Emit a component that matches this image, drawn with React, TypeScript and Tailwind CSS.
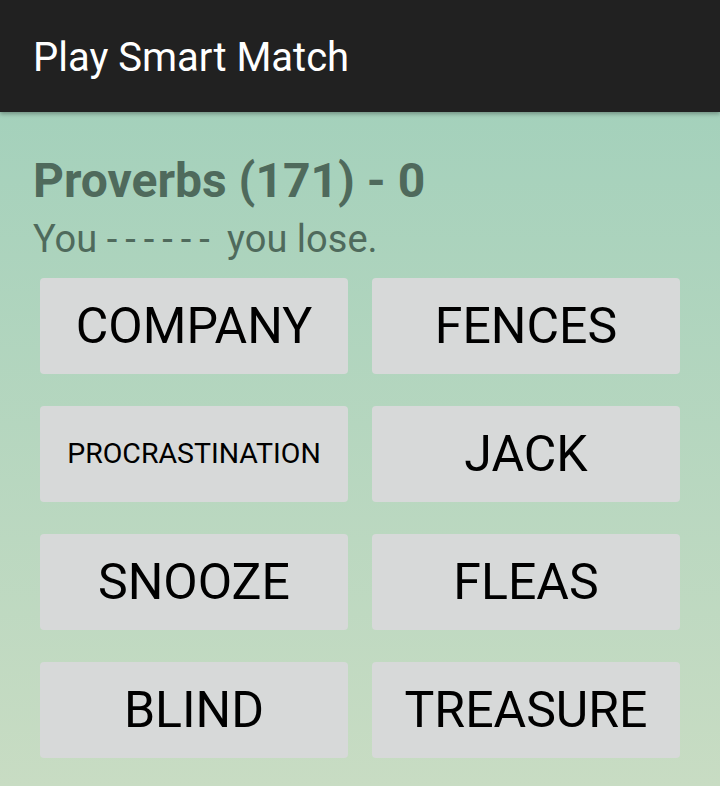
import React from 'react';

// Word tiles shown on the board
const words: { label: string; small?: boolean }[] = [
  { label: 'COMPANY' },
  { label: 'FENCES' },
  { label: 'PROCRASTINATION', small: true },
  { label: 'JACK' },
  { label: 'SNOOZE' },
  { label: 'FLEAS' },
  { label: 'BLIND' },
  { label: 'TREASURE' },
];

const WordButton: React.FC<{ label: string; small?: boolean }> = ({ label, small }) => (
  <button
    className={`h-[96px] rounded-[4px] bg-[#d7d9d9] text-black flex items-center justify-center ${
      small ? 'text-[28.5px]' : 'text-[50px]'
    }`}
  >
    {label}
  </button>
);

export default function App() {
  return (
    <div
      className="w-[720px] h-[786px] overflow-hidden flex flex-col bg-gradient-to-b from-[#9ecfba] to-[#c8dcc3]"
      style={{ fontFamily: 'Roboto, "Noto Sans", sans-serif' }}
    >
      {/* Action bar */}
      <header className="h-[112px] shrink-0 bg-[#212121] flex items-center px-[33px] shadow-[0_2px_4px_rgba(0,0,0,0.3)] relative z-10">
        <h1 className="text-white text-[40px] leading-none pt-[4px]">Play Smart Match</h1>
      </header>

      {/* Question */}
      <div className="px-[33px] pt-[41px]">
        <h2 className="text-[48px] leading-[56px] font-bold text-[#4f6a5c]">Proverbs (171) - 0</h2>
        <p className="mt-[8px] text-[38px] leading-[44px] text-[#4f6a5c]">
          You <span className="tracking-[8px]">------</span> you lose.
        </p>
      </div>

      {/* Answer grid */}
      <div className="grid grid-cols-2 gap-x-6 gap-y-8 px-10 mt-[17px]">
        {words.map((w) => (
          <WordButton key={w.label} label={w.label} small={w.small} />
        ))}
      </div>
    </div>
  );
}
